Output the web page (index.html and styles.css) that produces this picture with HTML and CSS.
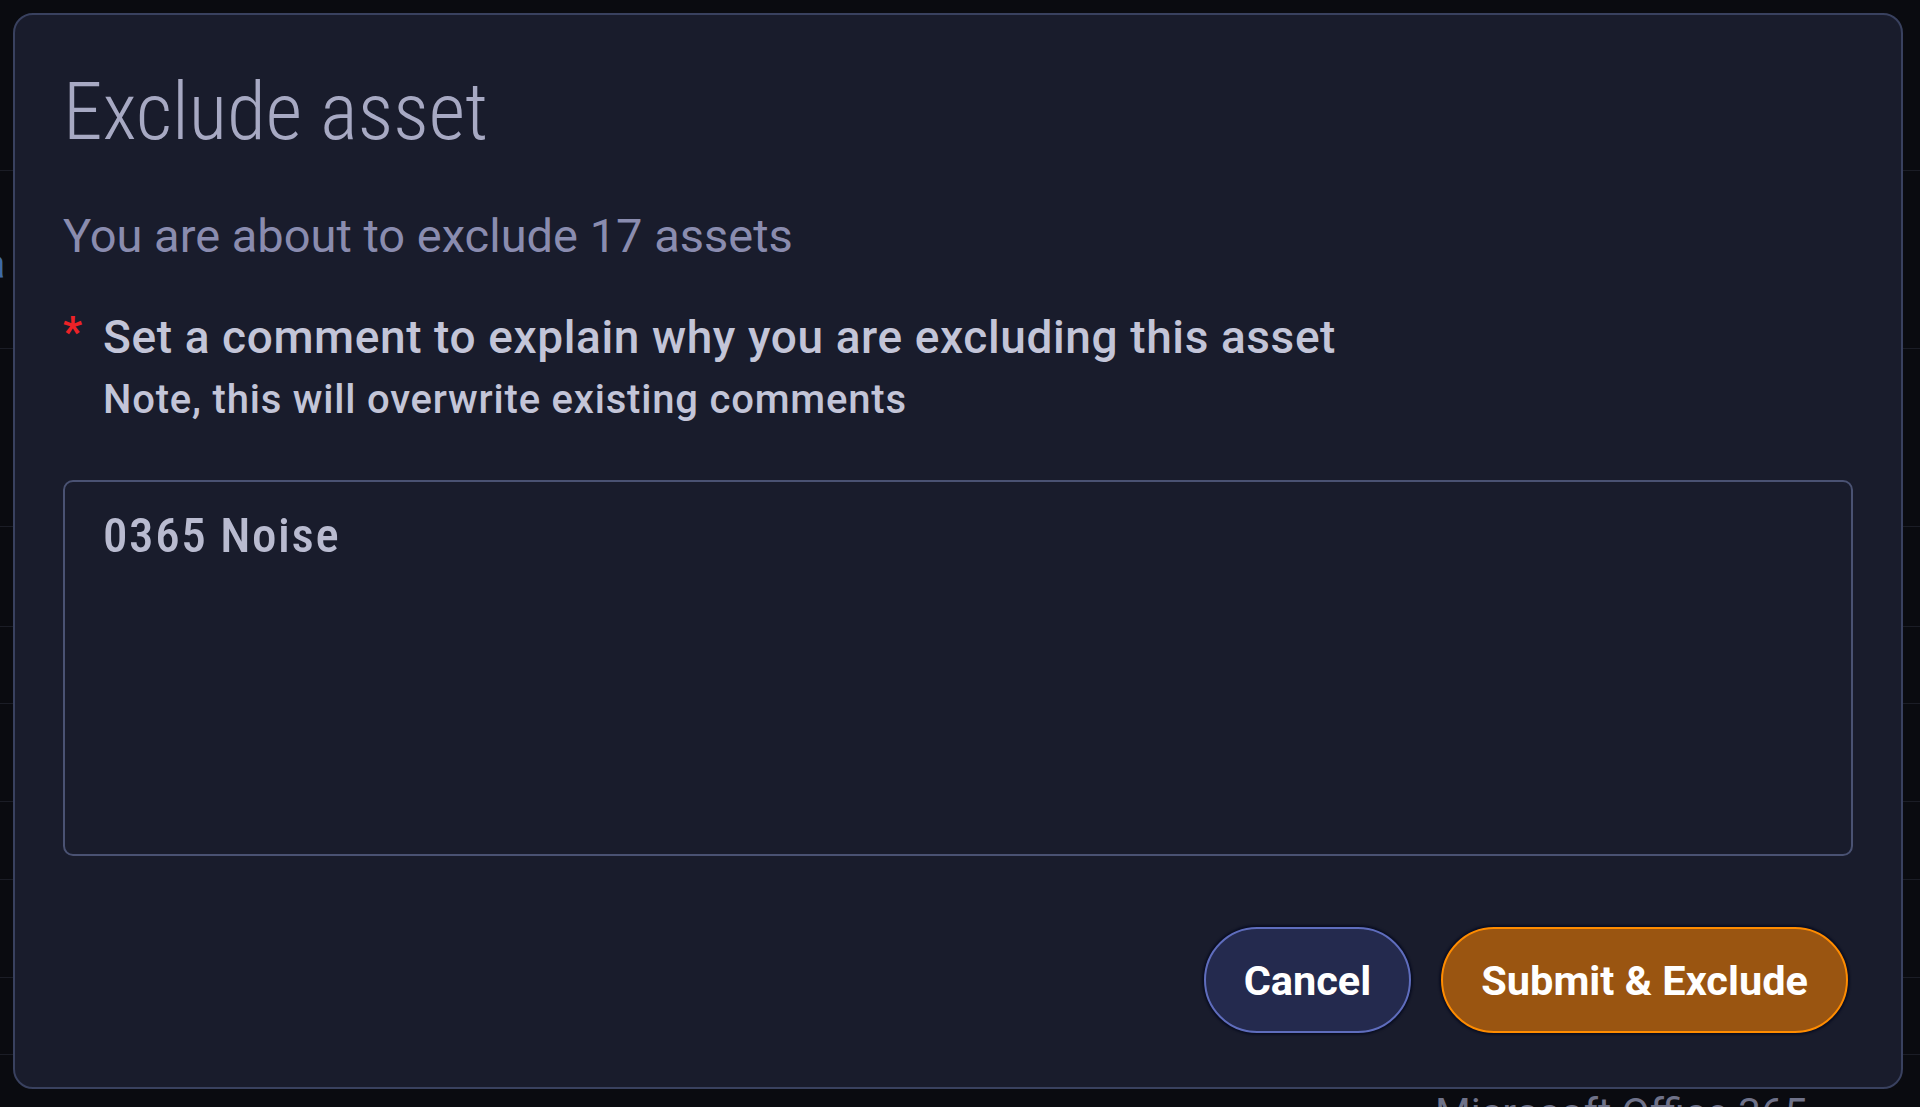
FILE: index.html
```html
<!DOCTYPE html>
<html lang="en">
<head>
<meta charset="utf-8">
<title>Exclude asset</title>
<link rel="stylesheet" href="styles.css">
</head>
<body>
<div class="page">
  <div class="bg-row row-h171"></div>
  <div class="bg-row row-h178"><span class="cut-text">a</span></div>
  <div class="bg-row row-h178"></div>
  <div class="bg-row row-h100"></div>
  <div class="bg-row row-h77"></div>
  <div class="bg-row row-h98"></div>
  <div class="bg-row row-h78"></div>
  <div class="bg-row row-h98"></div>
  <div class="bg-row row-h77"></div>
  <div class="bg-row row-last"><span class="bg-cell">Microsoft Office 365</span></div>
</div>

<div class="modal" role="dialog" aria-labelledby="modal-title">
  <h1 class="modal-title" id="modal-title">Exclude asset</h1>
  <p class="modal-subtitle">You are about to exclude 17 assets</p>
  <div class="field-label">
    <span class="required">*</span>
    <div class="label-text">
      <div class="label-main">Set a comment to explain why you are excluding this asset</div>
      <div class="label-note">Note, this will overwrite existing comments</div>
    </div>
  </div>
  <textarea class="comment" spellcheck="false">0365 Noise</textarea>
  <div class="modal-footer">
    <button class="btn btn-cancel" type="button">Cancel</button>
    <button class="btn btn-submit" type="button">Submit &amp; Exclude</button>
  </div>
</div>
</body>
</html>
```
FILE: styles.css
```css
* { box-sizing: border-box; }

html, body {
  margin: 0;
  padding: 0;
  background: #0a0b10;
  width: 1920px;
  height: 1107px;
  overflow: hidden;
  font-family: "Roboto Condensed", Roboto, "Liberation Sans", sans-serif;
}

/* background page behind the dialog */
.page {
  display: flex;
  flex-direction: column;
  height: 1107px;
  overflow: hidden;
}
.bg-row {
  border-bottom: 1px solid #1b1d26;
  flex: none;
  overflow: hidden;
}
.row-h171 { height: 171px; }
.row-h178 { height: 178px; }
.row-h100 { height: 100px; }
.row-h98 { height: 98px; }
.row-h78 { height: 78px; }
.row-h77 { height: 77px; }
.row-last { height: 52px; border-bottom: none; }

.cut-text {
  display: block;
  padding-top: 70px;
  margin-left: -14px;
  font-size: 40px;
  line-height: 48px;
  color: #3d6aa8;
}
.bg-cell {
  display: block;
  padding: 33px 0 0 1435px;
  font-family: Roboto, "Liberation Sans", sans-serif;
  font-size: 41px;
  line-height: 50px;
  color: #6f7289;
  white-space: nowrap;
}

/* dialog */
.modal {
  position: fixed;
  left: 13px;
  top: 13px;
  width: 1890px;
  height: 1076px;
  background: #191c2c;
  border: 2px solid #39415f;
  border-radius: 20px;
  padding: 50px 48px 54px 48px;
  display: flex;
  flex-direction: column;
}

.modal-title {
  margin: 0;
  font-family: "Roboto Condensed", Roboto, sans-serif;
  font-size: 79.5px;
  line-height: 94px;
  font-weight: 300;
  color: #a7a9c3;
  white-space: nowrap;
}

.modal-subtitle {
  margin: 48px 0 0 0;
  font-family: Roboto, "Liberation Sans", sans-serif;
  font-size: 47px;
  line-height: 58px;
  font-weight: 400;
  color: #8a8caf;
}

.field-label {
  margin-top: 45px;
  display: flex;
  align-items: flex-start;
}
.required {
  width: 40px;
  flex: none;
  margin-top: -5px;
  font-family: Roboto, sans-serif;
  font-size: 42px;
  line-height: 54px;
  font-weight: 700;
  color: #ec2227;
}
.label-text {
  display: flex;
  flex-direction: column;
  gap: 12px;
}
.label-main {
  font-family: Roboto, "Liberation Sans", sans-serif;
  font-size: 46px;
  line-height: 54px;
  letter-spacing: 0.6px;
  font-weight: 500;
  color: #c3c5d8;
  white-space: nowrap;
}
.label-note {
  font-family: Roboto, "Liberation Sans", sans-serif;
  font-size: 40px;
  line-height: 48px;
  letter-spacing: 0.8px;
  font-weight: 500;
  color: #c3c5d8;
  white-space: nowrap;
}

.comment {
  display: block;
  margin-top: 56px;
  width: 100%;
  height: 376px;
  flex: none;
  resize: none;
  background: #191c2c;
  border: 2px solid #4a5273;
  border-radius: 10px;
  padding: 25px 38px;
  font-family: "Roboto Condensed", Roboto, "Liberation Sans", sans-serif;
  font-size: 49px;
  line-height: 58px;
  letter-spacing: 1.6px;
  font-weight: 500;
  color: #b9bbd0;
  outline: none;
}

.modal-footer {
  margin-top: 71px;
  display: flex;
  justify-content: flex-end;
  gap: 30px;
  padding-right: 5px;
}

.btn {
  height: 106px;
  padding: 0 38px;
  border-radius: 53px;
  border: 2px solid;
  font-family: Roboto, "Liberation Sans", sans-serif;
  font-size: 41.5px;
  font-weight: 700;
  color: #ffffff;
  cursor: pointer;
  box-shadow: 0 0 2px 2px rgba(4, 8, 30, 0.7);
}
.btn-cancel {
  background: #242a4e;
  border-color: #5f6dbd;
}
.btn-submit {
  background: #9a5511;
  border-color: #ff8c00;
}
```
